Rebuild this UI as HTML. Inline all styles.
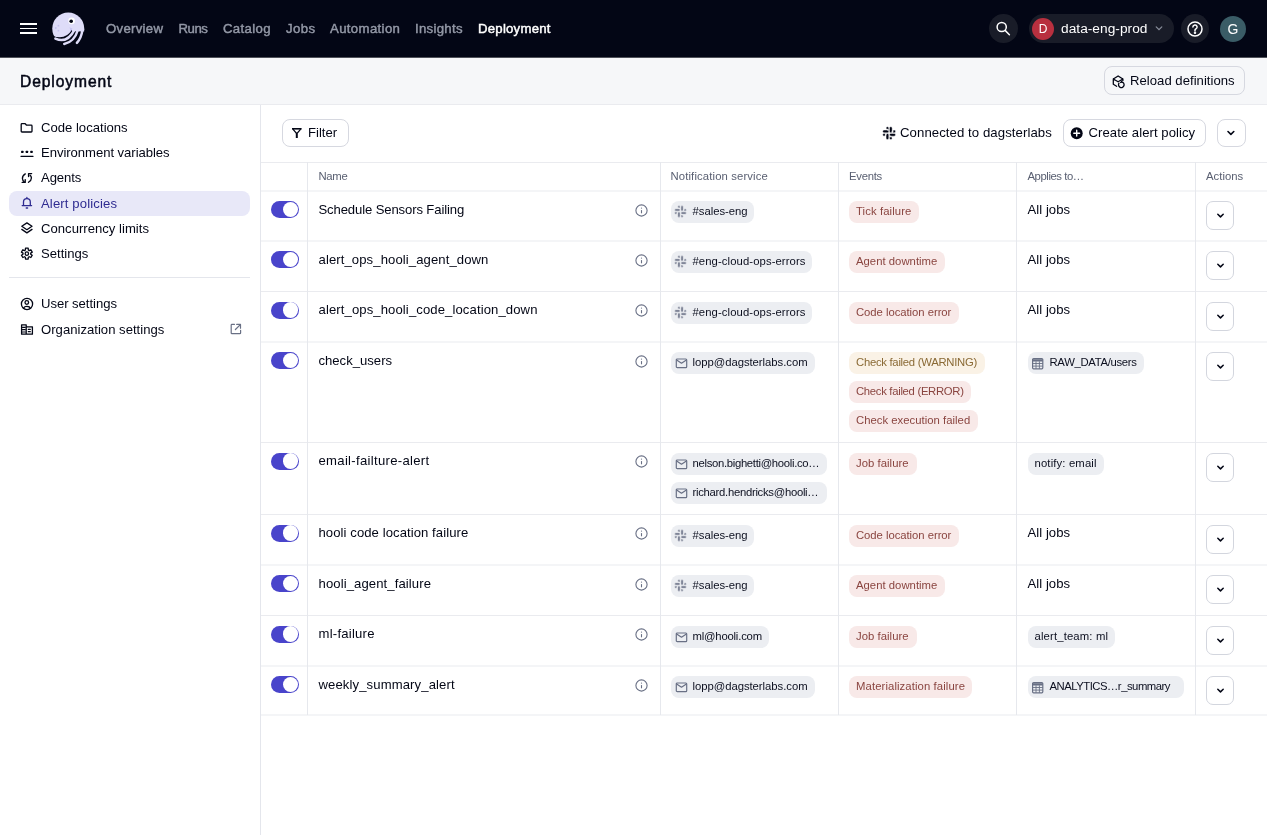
<!DOCTYPE html>
<html><head><meta charset="utf-8">
<style>
*{box-sizing:border-box;margin:0;padding:0}
html,body{width:1267px;height:835px;overflow:hidden;background:#fff;}
body{will-change:transform;font-family:"Liberation Sans",sans-serif;color:#030615}
.abs{position:absolute}
#nav{position:absolute;left:0;top:0;width:1267px;height:57px;background:#030615;border-bottom:1px solid #030615}
.nv{position:absolute;top:21px;font-size:13.2px;-webkit-text-stroke:0.45px currentColor;color:#9398a6;white-space:nowrap;line-height:16px}
#hdr{position:absolute;left:0;top:57px;width:1267px;height:48px;background:#f6f7f9;border-top:1px solid #50525a;border-bottom:1px solid #eaebef}
#side{position:absolute;left:0;top:105px;width:261px;height:730px;border-right:1px solid #e4e6ec;background:#fff}
.si{position:absolute;left:9px;width:241px;height:25px;border-radius:8px;font-size:13.1px;line-height:25px;padding-left:32px;white-space:nowrap;color:#030615}
.si.act{background:#e8e8f8;color:#2f2c91}
.btn{position:absolute;height:28px;border:1px solid #d6d8e0;border-radius:8px;background:#fff;font-size:13.1px;line-height:26px;white-space:nowrap}
.tag{position:absolute;height:22px;border-radius:8px;background:#eceef2;font-size:11.3px;line-height:21px;white-space:nowrap;color:#0c0f1f;padding-left:22px;overflow:hidden}
.tag svg{position:absolute;left:4px;top:5px}
.tag.np{padding-left:7px}
.ev{position:absolute;height:22px;border-radius:8px;background:#f8e9e8;color:#8a4540;font-size:11.3px;line-height:21px;white-space:nowrap;padding-left:7px;overflow:hidden}
.ev.w{background:#faf2e6;color:#8a6a35}
.hl{position:absolute;height:1px;background:#eaebef}
.vl{position:absolute;width:1px;background:#e6e8ed}
.th{position:absolute;top:169px;font-size:11.3px;color:#5a6072;line-height:14px;white-space:nowrap}
.nm{position:absolute;left:318.5px;font-size:13.1px;line-height:16px;white-space:nowrap;color:#030615}
.tog{position:absolute;left:271px;width:28px;height:17px;border-radius:9px;background:#4944cb}
.tog::after{content:"";position:absolute;right:0.7px;top:0.7px;width:15.6px;height:15.6px;border-radius:50%;background:#fff}
.info{position:absolute;left:635.4px;width:13px;height:13px}
.info svg{position:absolute;left:0;top:0}
.aj{position:absolute;left:1027.5px;font-size:13.1px;line-height:16px;white-space:nowrap}
.ab{position:absolute;left:1206px;width:28px;height:29px;border:1px solid #d3d6de;border-radius:7px;background:#fff}
.ab svg{position:absolute;left:7.5px;top:8px}
</style></head><body>
<div id="nav">
  <div class="abs" style="left:20.3px;top:23.2px;width:16.6px;height:1.7px;background:#fff"></div>
  <div class="abs" style="left:20.3px;top:27.7px;width:16.6px;height:1.7px;background:#fff"></div>
  <div class="abs" style="left:20.3px;top:32.2px;width:16.6px;height:1.7px;background:#fff"></div>
  <svg class="abs" style="left:50px;top:10px" width="37" height="37" viewBox="0 0 37 37">
    <g transform="translate(-2,-2)">
    <circle cx="20.25" cy="20.5" r="16" fill="#dedcf8"/>
    <path d="M21.5 19.2 Q23.5 24 19.5 27 Q15 29.8 9 29 Q14 31.2 19.5 29.6 Q24.6 27 24.4 20.5 Z" fill="#c9c5f2"/>
    <circle cx="10.4" cy="17.7" r=".9" fill="#c4c0f0"/><circle cx="7.8" cy="20" r=".9" fill="#c4c0f0"/><circle cx="10.4" cy="22.7" r=".9" fill="#c4c0f0"/>
    <path d="M4 27.4 Q17 33.2 24.4 21.3 L38 22.5 L38 40 L2 40 Z" fill="#030615"/>
    <g fill="none" stroke="#dedcf8" stroke-width="2.5" stroke-linecap="round">
      <path d="M7.4 30.6 Q19.2 36 26.6 21.6"/>
      <path d="M16.2 35.9 Q26.2 34.2 29.9 22"/>
      <path d="M28.9 34.9 Q33.3 30 34.3 22.6"/>
    </g>
    <path d="M24 21 L36.3 21 L36.1 23.6 L24 23.2 Z" fill="#dedcf8"/>
    <circle cx="23.6" cy="12.9" r="3.3" fill="#fff"/>
    <circle cx="23.2" cy="13.3" r="1.8" fill="#030615"/>
    </g>
  </svg>
  <div class="nv" style="left:106px;letter-spacing:0.279px">Overview</div>
  <div class="nv" style="left:178.5px;letter-spacing:-0.441px">Runs</div>
  <div class="nv" style="left:223px;letter-spacing:0.338px">Catalog</div>
  <div class="nv" style="left:286px;letter-spacing:0.383px">Jobs</div>
  <div class="nv" style="left:330px;letter-spacing:0.356px">Automation</div>
  <div class="nv" style="left:415px;letter-spacing:0.289px">Insights</div>
  <div class="nv" style="left:478px;color:#fff;letter-spacing:0.231px">Deployment</div>
  <div class="abs" style="left:989px;top:14px;width:28.5px;height:29px;border-radius:50%;background:#191c28"></div>
  <svg class="abs" style="left:995px;top:20px" width="18" height="18" viewBox="0 0 18 18" fill="none" stroke="#fff" stroke-width="1.5" stroke-linecap="round"><circle cx="6.7" cy="7" r="4.6"/><path d="M10.1 10.4L14.4 14.7"/></svg>
  <div class="abs" style="left:1028.5px;top:14px;width:145px;height:29px;border-radius:14.5px;background:#191c28"></div>
  <div class="abs" style="left:1032px;top:17.6px;width:22px;height:22px;border-radius:50%;background:#b8303f;color:#fff;font-size:12px;line-height:22px;text-align:center">D</div>
  <div class="abs" style="left:1061px;top:21px;font-size:13.7px;line-height:16px;color:#fff;white-space:nowrap;letter-spacing:0.033px">data-eng-prod</div>
  <svg class="abs" style="left:1154px;top:23px" width="10" height="10" viewBox="0 0 10 10" fill="none" stroke="#8a8f9c" stroke-width="1.2" stroke-linecap="round"><path d="M2.2 3.8L5 6.6L7.8 3.8"/></svg>
  <div class="abs" style="left:1180.5px;top:14px;width:28.5px;height:29px;border-radius:50%;background:#191c28"></div>
  <svg class="abs" style="left:1186px;top:20px" width="18" height="18" viewBox="0 0 18 18" fill="none" stroke="#fff" stroke-width="1.5" stroke-linecap="round"><circle cx="9" cy="9" r="7"/><path d="M6.9 7.1a2.1 2.1 0 1 1 2.9 1.9c-.5.2-.8.6-.8 1.1v.6"/><circle cx="9" cy="12.8" r=".5" fill="#fff"/></svg>
  <div class="abs" style="left:1220px;top:15.5px;width:26px;height:26px;border-radius:50%;background:#3a5c66;color:#fff;font-size:14px;line-height:26px;text-align:center">G</div>
</div>
<div id="hdr">
  <div class="abs" style="left:20px;top:13.5px;font-size:15.6px;line-height:20px;font-weight:normal;-webkit-text-stroke:0.5px currentColor;letter-spacing:0.908px">Deployment</div>
  <div class="btn" style="left:1104px;top:8.3px;height:29px;line-height:27px;width:141px;padding-left:25px;background:#f6f7f9;letter-spacing:0.033px">Reload definitions</div>
</div>
<div id="side">
  <div class="si" style="top:10px;letter-spacing:0.003px">Code locations</div>
  <div class="si" style="top:35px;letter-spacing:-0.046px">Environment variables</div>
  <div class="si" style="top:60px;letter-spacing:-0.081px">Agents</div>
  <div class="si act" style="top:86px;letter-spacing:0.133px">Alert policies</div>
  <div class="si" style="top:111px;letter-spacing:0.015px">Concurrency limits</div>
  <div class="si" style="top:136px;letter-spacing:-0.008px">Settings</div>
  <div class="abs" style="left:9px;top:172px;width:241px;height:1px;background:#e4e6ec"></div>
  <div class="si" style="top:186px;letter-spacing:-0.037px">User settings</div>
  <div class="si" style="top:212px;letter-spacing:0.016px">Organization settings</div>
</div>
<div class="btn" style="left:282px;top:119px;width:66.5px;padding-left:25px;letter-spacing:-0.016px">Filter</div>
<div class="abs" style="left:900px;top:125px;font-size:13.2px;line-height:16px;white-space:nowrap;letter-spacing:0.066px">Connected to dagsterlabs</div>
<div class="btn" style="left:1062.5px;top:119px;width:143px;padding-left:25px;letter-spacing:0.062px">Create alert policy</div>
<div class="btn" style="left:1216.5px;top:119px;width:29px"></div>
<div class="hl" style="left:261px;top:162px;width:1006px"></div>
<div class="hl" style="left:261px;top:190px;width:1006px;height:2px;background:#f4f5f7"></div>
<div class="hl" style="left:261px;top:240px;width:1006px;height:2px;background:#f4f5f7"></div>
<div class="hl" style="left:261px;top:291px;width:1006px"></div>
<div class="hl" style="left:261px;top:341px;width:1006px;height:2px;background:#f4f5f7"></div>
<div class="hl" style="left:261px;top:442px;width:1006px"></div>
<div class="hl" style="left:261px;top:514px;width:1006px"></div>
<div class="hl" style="left:261px;top:564px;width:1006px;height:2px;background:#f4f5f7"></div>
<div class="hl" style="left:261px;top:615px;width:1006px"></div>
<div class="hl" style="left:261px;top:665px;width:1006px;height:2px;background:#f4f5f7"></div>
<div class="hl" style="left:261px;top:714px;width:1006px;height:2px;background:#f4f5f7"></div>
<div class="vl" style="left:307px;top:162px;height:553px"></div>
<div class="vl" style="left:660px;top:162px;height:553px"></div>
<div class="vl" style="left:838px;top:162px;height:553px"></div>
<div class="vl" style="left:1016px;top:162px;height:553px"></div>
<div class="vl" style="left:1195px;top:162px;height:553px"></div>
<div class="th" style="left:318.5px;letter-spacing:-0.324px">Name</div>
<div class="th" style="left:670.5px;letter-spacing:0.131px">Notification service</div>
<div class="th" style="left:849px;letter-spacing:-0.264px">Events</div>
<div class="th" style="left:1027.5px;letter-spacing:-0.431px">Applies to…</div>
<div class="th" style="left:1206px;letter-spacing:0.023px">Actions</div>
<div class="tog" style="top:201.0px"></div>
<div class="nm" style="top:201.5px;letter-spacing:-0.120px">Schedule Sensors Failing</div>
<div class="info" style="top:203.9px"><svg width="13" height="13" viewBox="0 0 13 13" fill="none" stroke="#697085" stroke-width="1.1"><circle cx="6.5" cy="6.5" r="5.6"/><path d="M6.5 6.1V9.3" stroke-width="1.1"/><circle cx="6.5" cy="4.1" r=".6" fill="#697085" stroke="none"/></svg></div>
<div class="tag" style="left:670.5px;top:201.0px;width:83.2px;letter-spacing:-0.017px"><svg style="top:4.2px;left:3.6px" width="13" height="13" viewBox="-1.2 -1.2 26.4 26.4" fill="#6f768a" stroke="#eceef2" stroke-width="1.5"><path d="M5.042 15.165a2.528 2.528 0 0 1-2.52 2.523A2.528 2.528 0 0 1 0 15.165a2.527 2.527 0 0 1 2.522-2.52h2.52v2.52zM6.313 15.165a2.527 2.527 0 0 1 2.521-2.52 2.527 2.527 0 0 1 2.521 2.52v6.313A2.528 2.528 0 0 1 8.834 24a2.528 2.528 0 0 1-2.521-2.522v-6.313zM8.834 5.042a2.528 2.528 0 0 1-2.521-2.52A2.528 2.528 0 0 1 8.834 0a2.528 2.528 0 0 1 2.521 2.522v2.52H8.834zM8.834 6.313a2.528 2.528 0 0 1 2.521 2.521 2.528 2.528 0 0 1-2.521 2.521H2.522A2.528 2.528 0 0 1 0 8.834a2.528 2.528 0 0 1 2.522-2.521h6.312zM18.956 8.834a2.528 2.528 0 0 1 2.522-2.521A2.528 2.528 0 0 1 24 8.834a2.528 2.528 0 0 1-2.522 2.521h-2.522V8.834zM17.688 8.834a2.528 2.528 0 0 1-2.523 2.521 2.527 2.527 0 0 1-2.52-2.521V2.522A2.527 2.527 0 0 1 15.165 0a2.528 2.528 0 0 1 2.523 2.522v6.312zM15.165 18.956a2.528 2.528 0 0 1 2.523 2.522A2.528 2.528 0 0 1 15.165 24a2.527 2.527 0 0 1-2.52-2.522v-2.522h2.52zM15.165 17.688a2.527 2.527 0 0 1-2.52-2.523 2.526 2.526 0 0 1 2.52-2.52h6.313A2.527 2.527 0 0 1 24 15.165a2.528 2.528 0 0 1-2.522 2.523h-6.313z"/></svg>#sales-eng</div>
<div class="ev" style="left:849px;top:201.0px;width:69.7px;letter-spacing:0.105px">Tick failure</div>
<div class="aj" style="top:201.5px;letter-spacing:0.050px">All jobs</div>
<div class="ab" style="top:201.0px"><svg width="11" height="11" viewBox="0 0 11 11" fill="none" stroke="#030615" stroke-width="1.5" stroke-linecap="round" stroke-linejoin="round"><path d="M2.8 4.2 L5.5 6.9 L8.2 4.2"/></svg></div>
<div class="tog" style="top:251.0px"></div>
<div class="nm" style="top:251.5px;letter-spacing:0.098px">alert_ops_hooli_agent_down</div>
<div class="info" style="top:253.9px"><svg width="13" height="13" viewBox="0 0 13 13" fill="none" stroke="#697085" stroke-width="1.1"><circle cx="6.5" cy="6.5" r="5.6"/><path d="M6.5 6.1V9.3" stroke-width="1.1"/><circle cx="6.5" cy="4.1" r=".6" fill="#697085" stroke="none"/></svg></div>
<div class="tag" style="left:670.5px;top:251.0px;width:141.1px;letter-spacing:0.090px"><svg style="top:4.2px;left:3.6px" width="13" height="13" viewBox="-1.2 -1.2 26.4 26.4" fill="#6f768a" stroke="#eceef2" stroke-width="1.5"><path d="M5.042 15.165a2.528 2.528 0 0 1-2.52 2.523A2.528 2.528 0 0 1 0 15.165a2.527 2.527 0 0 1 2.522-2.52h2.52v2.52zM6.313 15.165a2.527 2.527 0 0 1 2.521-2.52 2.527 2.527 0 0 1 2.521 2.52v6.313A2.528 2.528 0 0 1 8.834 24a2.528 2.528 0 0 1-2.521-2.522v-6.313zM8.834 5.042a2.528 2.528 0 0 1-2.521-2.52A2.528 2.528 0 0 1 8.834 0a2.528 2.528 0 0 1 2.521 2.522v2.52H8.834zM8.834 6.313a2.528 2.528 0 0 1 2.521 2.521 2.528 2.528 0 0 1-2.521 2.521H2.522A2.528 2.528 0 0 1 0 8.834a2.528 2.528 0 0 1 2.522-2.521h6.312zM18.956 8.834a2.528 2.528 0 0 1 2.522-2.521A2.528 2.528 0 0 1 24 8.834a2.528 2.528 0 0 1-2.522 2.521h-2.522V8.834zM17.688 8.834a2.528 2.528 0 0 1-2.523 2.521 2.527 2.527 0 0 1-2.52-2.521V2.522A2.527 2.527 0 0 1 15.165 0a2.528 2.528 0 0 1 2.523 2.522v6.312zM15.165 18.956a2.528 2.528 0 0 1 2.523 2.522A2.528 2.528 0 0 1 15.165 24a2.527 2.527 0 0 1-2.52-2.522v-2.522h2.52zM15.165 17.688a2.527 2.527 0 0 1-2.52-2.523 2.526 2.526 0 0 1 2.52-2.52h6.313A2.527 2.527 0 0 1 24 15.165a2.528 2.528 0 0 1-2.522 2.523h-6.313z"/></svg>#eng-cloud-ops-errors</div>
<div class="ev" style="left:849px;top:251.0px;width:95.5px;letter-spacing:0.021px">Agent downtime</div>
<div class="aj" style="top:251.5px;letter-spacing:0.050px">All jobs</div>
<div class="ab" style="top:251.0px"><svg width="11" height="11" viewBox="0 0 11 11" fill="none" stroke="#030615" stroke-width="1.5" stroke-linecap="round" stroke-linejoin="round"><path d="M2.8 4.2 L5.5 6.9 L8.2 4.2"/></svg></div>
<div class="tog" style="top:301.5px"></div>
<div class="nm" style="top:302px;letter-spacing:0.105px">alert_ops_hooli_code_location_down</div>
<div class="info" style="top:304.4px"><svg width="13" height="13" viewBox="0 0 13 13" fill="none" stroke="#697085" stroke-width="1.1"><circle cx="6.5" cy="6.5" r="5.6"/><path d="M6.5 6.1V9.3" stroke-width="1.1"/><circle cx="6.5" cy="4.1" r=".6" fill="#697085" stroke="none"/></svg></div>
<div class="tag" style="left:670.5px;top:301.5px;width:141.1px;letter-spacing:0.090px"><svg style="top:4.2px;left:3.6px" width="13" height="13" viewBox="-1.2 -1.2 26.4 26.4" fill="#6f768a" stroke="#eceef2" stroke-width="1.5"><path d="M5.042 15.165a2.528 2.528 0 0 1-2.52 2.523A2.528 2.528 0 0 1 0 15.165a2.527 2.527 0 0 1 2.522-2.52h2.52v2.52zM6.313 15.165a2.527 2.527 0 0 1 2.521-2.52 2.527 2.527 0 0 1 2.521 2.52v6.313A2.528 2.528 0 0 1 8.834 24a2.528 2.528 0 0 1-2.521-2.522v-6.313zM8.834 5.042a2.528 2.528 0 0 1-2.521-2.52A2.528 2.528 0 0 1 8.834 0a2.528 2.528 0 0 1 2.521 2.522v2.52H8.834zM8.834 6.313a2.528 2.528 0 0 1 2.521 2.521 2.528 2.528 0 0 1-2.521 2.521H2.522A2.528 2.528 0 0 1 0 8.834a2.528 2.528 0 0 1 2.522-2.521h6.312zM18.956 8.834a2.528 2.528 0 0 1 2.522-2.521A2.528 2.528 0 0 1 24 8.834a2.528 2.528 0 0 1-2.522 2.521h-2.522V8.834zM17.688 8.834a2.528 2.528 0 0 1-2.523 2.521 2.527 2.527 0 0 1-2.52-2.521V2.522A2.527 2.527 0 0 1 15.165 0a2.528 2.528 0 0 1 2.523 2.522v6.312zM15.165 18.956a2.528 2.528 0 0 1 2.523 2.522A2.528 2.528 0 0 1 15.165 24a2.527 2.527 0 0 1-2.52-2.522v-2.522h2.52zM15.165 17.688a2.527 2.527 0 0 1-2.52-2.523 2.526 2.526 0 0 1 2.52-2.52h6.313A2.527 2.527 0 0 1 24 15.165a2.528 2.528 0 0 1-2.522 2.523h-6.313z"/></svg>#eng-cloud-ops-errors</div>
<div class="ev" style="left:849px;top:301.5px;width:110.0px;letter-spacing:-0.039px">Code location error</div>
<div class="aj" style="top:302px;letter-spacing:0.050px">All jobs</div>
<div class="ab" style="top:301.5px"><svg width="11" height="11" viewBox="0 0 11 11" fill="none" stroke="#030615" stroke-width="1.5" stroke-linecap="round" stroke-linejoin="round"><path d="M2.8 4.2 L5.5 6.9 L8.2 4.2"/></svg></div>
<div class="tog" style="top:352.0px"></div>
<div class="nm" style="top:352.5px;letter-spacing:0.004px">check_users</div>
<div class="info" style="top:354.9px"><svg width="13" height="13" viewBox="0 0 13 13" fill="none" stroke="#697085" stroke-width="1.1"><circle cx="6.5" cy="6.5" r="5.6"/><path d="M6.5 6.1V9.3" stroke-width="1.1"/><circle cx="6.5" cy="4.1" r=".6" fill="#697085" stroke="none"/></svg></div>
<div class="tag" style="left:670.5px;top:352.0px;width:144.2px;letter-spacing:-0.035px"><svg width="13" height="12" viewBox="0 0 13 12" fill="none" stroke="#697085" stroke-width="1.2" stroke-linejoin="round"><rect x="1.3" y="2" width="10.4" height="8.6" rx=".9"/><path d="M1.6 2.9 L6.5 6.2 L11.4 2.9"/></svg>lopp@dagsterlabs.com</div>
<div class="ev w" style="left:849px;top:352.0px;width:135.6px;letter-spacing:-0.275px">Check failed (WARNING)</div>
<div class="ev" style="left:849px;top:381.0px;width:122.0px;letter-spacing:-0.299px">Check failed (ERROR)</div>
<div class="ev" style="left:849px;top:410.0px;width:128.8px;letter-spacing:0.025px">Check execution failed</div>
<div class="tag" style="left:1027.5px;top:352.0px;width:116.4px;letter-spacing:-0.313px"><svg style="top:4.5px;left:3.6px" width="13" height="13" viewBox="0 0 13 13" fill="none" stroke="#697085"><rect x="1.6" y="1.6" width="10.2" height="10.2" rx="1" stroke-width="1.2"/><path d="M1.6 3.3H11.8" stroke-width="2.2"/><path d="M1.6 6.5H11.8M1.6 9.1H11.8M5 4.3V11.8M8.4 4.3V11.8" stroke-width="0.9"/></svg>RAW_DATA/users</div>
<div class="ab" style="top:352.0px"><svg width="11" height="11" viewBox="0 0 11 11" fill="none" stroke="#030615" stroke-width="1.5" stroke-linecap="round" stroke-linejoin="round"><path d="M2.8 4.2 L5.5 6.9 L8.2 4.2"/></svg></div>
<div class="tog" style="top:452.5px"></div>
<div class="nm" style="top:453px;letter-spacing:0.307px">email-failture-alert</div>
<div class="info" style="top:455.4px"><svg width="13" height="13" viewBox="0 0 13 13" fill="none" stroke="#697085" stroke-width="1.1"><circle cx="6.5" cy="6.5" r="5.6"/><path d="M6.5 6.1V9.3" stroke-width="1.1"/><circle cx="6.5" cy="4.1" r=".6" fill="#697085" stroke="none"/></svg></div>
<div class="tag" style="left:670.5px;top:452.5px;width:156.8px;letter-spacing:-0.312px"><svg width="13" height="12" viewBox="0 0 13 12" fill="none" stroke="#697085" stroke-width="1.2" stroke-linejoin="round"><rect x="1.3" y="2" width="10.4" height="8.6" rx=".9"/><path d="M1.6 2.9 L6.5 6.2 L11.4 2.9"/></svg>nelson.bighetti@hooli.co…</div>
<div class="tag" style="left:670.5px;top:481.5px;width:156.8px;letter-spacing:-0.283px"><svg width="13" height="12" viewBox="0 0 13 12" fill="none" stroke="#697085" stroke-width="1.2" stroke-linejoin="round"><rect x="1.3" y="2" width="10.4" height="8.6" rx=".9"/><path d="M1.6 2.9 L6.5 6.2 L11.4 2.9"/></svg>richard.hendricks@hooli…</div>
<div class="ev" style="left:849px;top:452.5px;width:67.5px;letter-spacing:0.045px">Job failure</div>
<div class="tag np" style="left:1027.5px;top:452.5px;width:76.4px;letter-spacing:0.143px">notify: email</div>
<div class="ab" style="top:452.5px"><svg width="11" height="11" viewBox="0 0 11 11" fill="none" stroke="#030615" stroke-width="1.5" stroke-linecap="round" stroke-linejoin="round"><path d="M2.8 4.2 L5.5 6.9 L8.2 4.2"/></svg></div>
<div class="tog" style="top:524.5px"></div>
<div class="nm" style="top:525px;letter-spacing:0.076px">hooli code location failure</div>
<div class="info" style="top:527.4px"><svg width="13" height="13" viewBox="0 0 13 13" fill="none" stroke="#697085" stroke-width="1.1"><circle cx="6.5" cy="6.5" r="5.6"/><path d="M6.5 6.1V9.3" stroke-width="1.1"/><circle cx="6.5" cy="4.1" r=".6" fill="#697085" stroke="none"/></svg></div>
<div class="tag" style="left:670.5px;top:524.5px;width:83.2px;letter-spacing:-0.017px"><svg style="top:4.2px;left:3.6px" width="13" height="13" viewBox="-1.2 -1.2 26.4 26.4" fill="#6f768a" stroke="#eceef2" stroke-width="1.5"><path d="M5.042 15.165a2.528 2.528 0 0 1-2.52 2.523A2.528 2.528 0 0 1 0 15.165a2.527 2.527 0 0 1 2.522-2.52h2.52v2.52zM6.313 15.165a2.527 2.527 0 0 1 2.521-2.52 2.527 2.527 0 0 1 2.521 2.52v6.313A2.528 2.528 0 0 1 8.834 24a2.528 2.528 0 0 1-2.521-2.522v-6.313zM8.834 5.042a2.528 2.528 0 0 1-2.521-2.52A2.528 2.528 0 0 1 8.834 0a2.528 2.528 0 0 1 2.521 2.522v2.52H8.834zM8.834 6.313a2.528 2.528 0 0 1 2.521 2.521 2.528 2.528 0 0 1-2.521 2.521H2.522A2.528 2.528 0 0 1 0 8.834a2.528 2.528 0 0 1 2.522-2.521h6.312zM18.956 8.834a2.528 2.528 0 0 1 2.522-2.521A2.528 2.528 0 0 1 24 8.834a2.528 2.528 0 0 1-2.522 2.521h-2.522V8.834zM17.688 8.834a2.528 2.528 0 0 1-2.523 2.521 2.527 2.527 0 0 1-2.52-2.521V2.522A2.527 2.527 0 0 1 15.165 0a2.528 2.528 0 0 1 2.523 2.522v6.312zM15.165 18.956a2.528 2.528 0 0 1 2.523 2.522A2.528 2.528 0 0 1 15.165 24a2.527 2.527 0 0 1-2.52-2.522v-2.522h2.52zM15.165 17.688a2.527 2.527 0 0 1-2.52-2.523 2.526 2.526 0 0 1 2.52-2.52h6.313A2.527 2.527 0 0 1 24 15.165a2.528 2.528 0 0 1-2.522 2.523h-6.313z"/></svg>#sales-eng</div>
<div class="ev" style="left:849px;top:524.5px;width:110.0px;letter-spacing:-0.039px">Code location error</div>
<div class="aj" style="top:525px;letter-spacing:0.050px">All jobs</div>
<div class="ab" style="top:524.5px"><svg width="11" height="11" viewBox="0 0 11 11" fill="none" stroke="#030615" stroke-width="1.5" stroke-linecap="round" stroke-linejoin="round"><path d="M2.8 4.2 L5.5 6.9 L8.2 4.2"/></svg></div>
<div class="tog" style="top:575.0px"></div>
<div class="nm" style="top:575.5px;letter-spacing:0.100px">hooli_agent_failure</div>
<div class="info" style="top:577.9px"><svg width="13" height="13" viewBox="0 0 13 13" fill="none" stroke="#697085" stroke-width="1.1"><circle cx="6.5" cy="6.5" r="5.6"/><path d="M6.5 6.1V9.3" stroke-width="1.1"/><circle cx="6.5" cy="4.1" r=".6" fill="#697085" stroke="none"/></svg></div>
<div class="tag" style="left:670.5px;top:575.0px;width:83.2px;letter-spacing:-0.017px"><svg style="top:4.2px;left:3.6px" width="13" height="13" viewBox="-1.2 -1.2 26.4 26.4" fill="#6f768a" stroke="#eceef2" stroke-width="1.5"><path d="M5.042 15.165a2.528 2.528 0 0 1-2.52 2.523A2.528 2.528 0 0 1 0 15.165a2.527 2.527 0 0 1 2.522-2.52h2.52v2.52zM6.313 15.165a2.527 2.527 0 0 1 2.521-2.52 2.527 2.527 0 0 1 2.521 2.52v6.313A2.528 2.528 0 0 1 8.834 24a2.528 2.528 0 0 1-2.521-2.522v-6.313zM8.834 5.042a2.528 2.528 0 0 1-2.521-2.52A2.528 2.528 0 0 1 8.834 0a2.528 2.528 0 0 1 2.521 2.522v2.52H8.834zM8.834 6.313a2.528 2.528 0 0 1 2.521 2.521 2.528 2.528 0 0 1-2.521 2.521H2.522A2.528 2.528 0 0 1 0 8.834a2.528 2.528 0 0 1 2.522-2.521h6.312zM18.956 8.834a2.528 2.528 0 0 1 2.522-2.521A2.528 2.528 0 0 1 24 8.834a2.528 2.528 0 0 1-2.522 2.521h-2.522V8.834zM17.688 8.834a2.528 2.528 0 0 1-2.523 2.521 2.527 2.527 0 0 1-2.52-2.521V2.522A2.527 2.527 0 0 1 15.165 0a2.528 2.528 0 0 1 2.523 2.522v6.312zM15.165 18.956a2.528 2.528 0 0 1 2.523 2.522A2.528 2.528 0 0 1 15.165 24a2.527 2.527 0 0 1-2.52-2.522v-2.522h2.52zM15.165 17.688a2.527 2.527 0 0 1-2.52-2.523 2.526 2.526 0 0 1 2.52-2.52h6.313A2.527 2.527 0 0 1 24 15.165a2.528 2.528 0 0 1-2.522 2.523h-6.313z"/></svg>#sales-eng</div>
<div class="ev" style="left:849px;top:575.0px;width:95.5px;letter-spacing:0.021px">Agent downtime</div>
<div class="aj" style="top:575.5px;letter-spacing:0.050px">All jobs</div>
<div class="ab" style="top:575.0px"><svg width="11" height="11" viewBox="0 0 11 11" fill="none" stroke="#030615" stroke-width="1.5" stroke-linecap="round" stroke-linejoin="round"><path d="M2.8 4.2 L5.5 6.9 L8.2 4.2"/></svg></div>
<div class="tog" style="top:625.5px"></div>
<div class="nm" style="top:626px;letter-spacing:0.240px">ml-failure</div>
<div class="info" style="top:628.4px"><svg width="13" height="13" viewBox="0 0 13 13" fill="none" stroke="#697085" stroke-width="1.1"><circle cx="6.5" cy="6.5" r="5.6"/><path d="M6.5 6.1V9.3" stroke-width="1.1"/><circle cx="6.5" cy="4.1" r=".6" fill="#697085" stroke="none"/></svg></div>
<div class="tag" style="left:670.5px;top:625.5px;width:98.6px;letter-spacing:-0.196px"><svg width="13" height="12" viewBox="0 0 13 12" fill="none" stroke="#697085" stroke-width="1.2" stroke-linejoin="round"><rect x="1.3" y="2" width="10.4" height="8.6" rx=".9"/><path d="M1.6 2.9 L6.5 6.2 L11.4 2.9"/></svg>ml@hooli.com</div>
<div class="ev" style="left:849px;top:625.5px;width:67.5px;letter-spacing:0.045px">Job failure</div>
<div class="tag np" style="left:1027.5px;top:625.5px;width:87.2px;letter-spacing:0.147px">alert_team: ml</div>
<div class="ab" style="top:625.5px"><svg width="11" height="11" viewBox="0 0 11 11" fill="none" stroke="#030615" stroke-width="1.5" stroke-linecap="round" stroke-linejoin="round"><path d="M2.8 4.2 L5.5 6.9 L8.2 4.2"/></svg></div>
<div class="tog" style="top:676.0px"></div>
<div class="nm" style="top:676.5px;letter-spacing:0.115px">weekly_summary_alert</div>
<div class="info" style="top:678.9px"><svg width="13" height="13" viewBox="0 0 13 13" fill="none" stroke="#697085" stroke-width="1.1"><circle cx="6.5" cy="6.5" r="5.6"/><path d="M6.5 6.1V9.3" stroke-width="1.1"/><circle cx="6.5" cy="4.1" r=".6" fill="#697085" stroke="none"/></svg></div>
<div class="tag" style="left:670.5px;top:676.0px;width:144.2px;letter-spacing:-0.035px"><svg width="13" height="12" viewBox="0 0 13 12" fill="none" stroke="#697085" stroke-width="1.2" stroke-linejoin="round"><rect x="1.3" y="2" width="10.4" height="8.6" rx=".9"/><path d="M1.6 2.9 L6.5 6.2 L11.4 2.9"/></svg>lopp@dagsterlabs.com</div>
<div class="ev" style="left:849px;top:676.0px;width:123.0px;letter-spacing:0.101px">Materialization failure</div>
<div class="tag" style="left:1027.5px;top:676.0px;width:156.2px;letter-spacing:-0.488px"><svg style="top:4.5px;left:3.6px" width="13" height="13" viewBox="0 0 13 13" fill="none" stroke="#697085"><rect x="1.6" y="1.6" width="10.2" height="10.2" rx="1" stroke-width="1.2"/><path d="M1.6 3.3H11.8" stroke-width="2.2"/><path d="M1.6 6.5H11.8M1.6 9.1H11.8M5 4.3V11.8M8.4 4.3V11.8" stroke-width="0.9"/></svg>ANALYTICS…r_summary</div>
<div class="ab" style="top:676.0px"><svg width="11" height="11" viewBox="0 0 11 11" fill="none" stroke="#030615" stroke-width="1.5" stroke-linecap="round" stroke-linejoin="round"><path d="M2.8 4.2 L5.5 6.9 L8.2 4.2"/></svg></div>
<svg class="abs" style="left:0;top:0" width="1267" height="835" viewBox="0 0 1267 835" fill="none" stroke="#030615" stroke-width="1.3" stroke-linecap="round" stroke-linejoin="round">
  <!-- folder -->
  <path d="M21.2 124.5 Q21.2 123.7 22 123.7 H25.2 L26.6 125.2 H31.2 Q32 125.2 32 126 V131.2 Q32 132 31.2 132 H22 Q21.2 132 21.2 131.2 Z"/>
  <!-- env vars -->
  <g fill="#030615" stroke="none"><rect x="21.1" y="150.7" width="2.4" height="2.4" rx=".5"/><rect x="25.7" y="150.7" width="2.4" height="2.4" rx=".5"/><rect x="30.3" y="150.7" width="2.4" height="2.4" rx=".5"/></g>
  <path d="M21 156.3 H33" stroke-width="1.3"/>
  <!-- agents -->
  <path d="M25.3 173.9 Q22.4 175.6 22.4 178.4 Q22.5 180.5 24.3 181.9"/>
  <path d="M22.2 182.4 H25.2 V179.6" stroke-width="1.4"/>
  <path d="M28.5 182.3 Q31.4 180.5 31.4 177.9 Q31.3 176.2 30.1 175.3"/>
  <path d="M31.6 173.6 H28.6 V176.5" stroke-width="1.4"/>
  <!-- bell -->
  <g stroke="#2f2c91"><path d="M23.5 205.2 V202 Q23.5 198.7 26.9 198.7 Q30.3 198.7 30.3 202 V205.2"/><path d="M22.2 205.6 H31.6"/><path d="M26.9 197.4 V198.4" stroke-width="1.2"/><path d="M26.3 208 H27.5" stroke-width="1.5"/></g>
  <!-- layers -->
  <path d="M26.9 222.9 L32 226.3 L26.9 229.7 L21.8 226.3 Z"/>
  <path d="M21.8 229.4 L26.9 232.9 L32 229.4"/>
  <!-- gear -->
  <path d="M25.50 248.22 L28.20 248.22 L28.31 250.03 L29.25 250.58 L30.88 249.76 L32.23 252.11 L30.71 253.11 L30.71 254.19 L32.23 255.19 L30.88 257.54 L29.25 256.72 L28.31 257.27 L28.20 259.08 L25.50 259.08 L25.39 257.27 L24.45 256.72 L22.82 257.54 L21.47 255.19 L22.99 254.19 L22.99 253.11 L21.47 252.11 L22.82 249.76 L24.45 250.58 L25.39 250.03 Z" stroke-width="1.3"/>
  <circle cx="26.85" cy="253.65" r="1.7" stroke-width="1.3"/>
  <!-- user -->
  <circle cx="27" cy="304" r="5.6"/>
  <circle cx="26.8" cy="302.5" r="1.8"/>
  <path d="M23.6 308.3 Q24 306.3 26.9 306.3 Q29.8 306.3 30.3 308.3"/>
  <!-- org building -->
  <path d="M21.6 334.2 V324.8 H26.2 V334.2 Z M26.2 326.8 H32.4 V334.2 H26.2" />
  <path d="M22.5 327.3 H25.3 M22.5 329.7 H25.3 M22.5 332 H25.3 M28.3 329.4 H30.3 M28.3 331.7 H30.3" stroke-width="1.2"/>
  <!-- external link -->
  <path d="M234.5 324.3 H232 Q231.2 324.3 231.2 325.1 V332.9 Q231.2 333.7 232 333.7 H239.8 Q240.6 333.7 240.6 332.9 V330.3" stroke="#697085" stroke-width="1.2"/>
  <path d="M235.4 329.5 L240.1 324.8 M236.7 324.4 H240.5 V328.2" stroke="#697085" stroke-width="1.2"/>
  <!-- filter -->
  <path d="M292 128 H301.6 V129.6 H292 Z" fill="#030615" stroke="none"/><path d="M292.9 129.2 L296.3 133.2 M300.7 129.2 L297.3 133.2" stroke-width="1.3" stroke-linecap="butt"/><path d="M295.8 132.6 H297.8 V138 H295.8 Z" fill="#030615" stroke="none"/>
  <!-- slack connected -->
  <g fill="#030615" stroke="#fff" stroke-width="0.8" transform="translate(882.7,126.7) scale(0.535)"><path d="M5.042 15.165a2.528 2.528 0 0 1-2.52 2.523A2.528 2.528 0 0 1 0 15.165a2.527 2.527 0 0 1 2.522-2.52h2.52v2.52zM6.313 15.165a2.527 2.527 0 0 1 2.521-2.52 2.527 2.527 0 0 1 2.521 2.52v6.313A2.528 2.528 0 0 1 8.834 24a2.528 2.528 0 0 1-2.521-2.522v-6.313zM8.834 5.042a2.528 2.528 0 0 1-2.521-2.52A2.528 2.528 0 0 1 8.834 0a2.528 2.528 0 0 1 2.521 2.522v2.52H8.834zM8.834 6.313a2.528 2.528 0 0 1 2.521 2.521 2.528 2.528 0 0 1-2.521 2.521H2.522A2.528 2.528 0 0 1 0 8.834a2.528 2.528 0 0 1 2.522-2.521h6.312zM18.956 8.834a2.528 2.528 0 0 1 2.522-2.521A2.528 2.528 0 0 1 24 8.834a2.528 2.528 0 0 1-2.522 2.521h-2.522V8.834zM17.688 8.834a2.528 2.528 0 0 1-2.523 2.521 2.527 2.527 0 0 1-2.52-2.521V2.522A2.527 2.527 0 0 1 15.165 0a2.528 2.528 0 0 1 2.523 2.522v6.312zM15.165 18.956a2.528 2.528 0 0 1 2.523 2.522A2.528 2.528 0 0 1 15.165 24a2.527 2.527 0 0 1-2.52-2.522v-2.522h2.52zM15.165 17.688a2.527 2.527 0 0 1-2.52-2.523 2.526 2.526 0 0 1 2.52-2.52h6.313A2.527 2.527 0 0 1 24 15.165a2.528 2.528 0 0 1-2.522 2.523h-6.313z"/></g>
  <!-- create alert plus -->
  <circle cx="1076.7" cy="133.2" r="6" fill="#030615" stroke="none"/>
  <path d="M1076.7 130.3 V136.1 M1073.8 133.2 H1079.6" stroke="#fff" stroke-width="1.4"/>
  <!-- dropdown chevron -->
  <path d="M1228 131.5 L1230.9 134.4 L1233.8 131.5" stroke-width="1.6"/>
  <!-- reload defs icon -->
  <path d="M1113.3 79 L1118.1 76 L1122.9 79 L1118.1 81.8 Z M1113.3 79 V84.3 L1116.6 86.3 M1122.9 79 V80.6" stroke-width="1.3"/>
  <path d="M1121.6 82 A2.8 2.8 0 1 1 1119 83.2" stroke-width="1.3"/>
  <path d="M1121.2 80.9 L1121.8 82.1 L1120.5 82.6" stroke-width="1.1"/>
</svg>

</body></html>
